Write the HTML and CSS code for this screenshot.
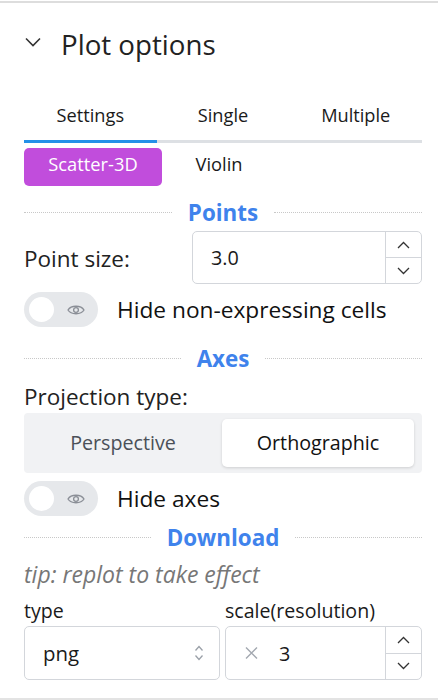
FILE: index.html
```html
<!DOCTYPE html>
<html>
<head>
<meta charset="utf-8">
<link rel="stylesheet" href="styles.css">
</head>
<body>
<div class="panel">
  <div class="header">
    <svg class="chev" width="16" height="10" viewBox="0 0 16 10"><path d="M1 1.5 L8 8.5 L15 1.5" fill="none" stroke="#333" stroke-width="1.6"/></svg>
    <span class="title">Plot options</span>
  </div>

  <div class="tabs">
    <div class="tab active">Settings</div>
    <div class="tab">Single</div>
    <div class="tab">Multiple</div>
  </div>

  <div class="subtabs">
    <div class="pill active">Scatter-3D</div>
    <div class="pill">Violin</div>
  </div>

  <div class="divider points"><span>Points</span></div>

  <div class="row">
    <label class="lbl">Point size:</label>
    <div class="num wide">
      <div class="num-val">3.0</div>
      <div class="spin">
        <div class="spin-btn"><svg width="13" height="8" viewBox="0 0 13 8"><path d="M1 7 L6.5 1.5 L12 7" fill="none" stroke="#333" stroke-width="1.3"/></svg></div>
        <div class="spin-btn"><svg width="13" height="8" viewBox="0 0 13 8"><path d="M1 1 L6.5 6.5 L12 1" fill="none" stroke="#333" stroke-width="1.3"/></svg></div>
      </div>
    </div>
  </div>

  <div class="toggle-row">
    <div class="toggle">
      <div class="knob"></div>
      <svg class="eye" width="18" height="12" viewBox="0 0 18 12"><path d="M1 6 C4 1 14 1 17 6 C14 11 4 11 1 6 Z" fill="none" stroke="#8a8e96" stroke-width="1.3"/><circle cx="9" cy="6" r="2.4" fill="none" stroke="#8a8e96" stroke-width="1.3"/></svg>
    </div>
    <span class="toggle-label">Hide non-expressing cells</span>
  </div>

  <div class="divider axes"><span>Axes</span></div>

  <div class="lbl proj">Projection type:</div>
  <div class="seg">
    <div class="seg-item">Perspective</div>
    <div class="seg-item active">Orthographic</div>
  </div>

  <div class="toggle-row t2">
    <div class="toggle">
      <div class="knob"></div>
      <svg class="eye" width="18" height="12" viewBox="0 0 18 12"><path d="M1 6 C4 1 14 1 17 6 C14 11 4 11 1 6 Z" fill="none" stroke="#8a8e96" stroke-width="1.3"/><circle cx="9" cy="6" r="2.4" fill="none" stroke="#8a8e96" stroke-width="1.3"/></svg>
    </div>
    <span class="toggle-label">Hide axes</span>
  </div>

  <div class="divider dl"><span>Download</span></div>

  <div class="tip">tip: replot to take effect</div>

  <div class="dl-grid">
    <div class="field">
      <div class="small-lbl">type</div>
      <div class="select">
        <span>png</span>
        <svg width="10" height="16" viewBox="0 0 10 16"><path d="M1.5 5.5 L5 1.5 L8.5 5.5 M1.5 10.5 L5 14.5 L8.5 10.5" fill="none" stroke="#9aa0a8" stroke-width="1.3"/></svg>
      </div>
    </div>
    <div class="field">
      <div class="small-lbl">scale(resolution)</div>
      <div class="num">
        <div class="num-val"><svg class="times" width="13" height="12" viewBox="0 0 13 12"><path d="M1 0.5 L12 11.5 M12 0.5 L1 11.5" fill="none" stroke="#a3a8b0" stroke-width="1.4"/></svg>3</div>
        <div class="spin">
          <div class="spin-btn"><svg width="13" height="8" viewBox="0 0 13 8"><path d="M1 7 L6.5 1.5 L12 7" fill="none" stroke="#333" stroke-width="1.3"/></svg></div>
          <div class="spin-btn"><svg width="13" height="8" viewBox="0 0 13 8"><path d="M1 1 L6.5 6.5 L12 1" fill="none" stroke="#333" stroke-width="1.3"/></svg></div>
        </div>
      </div>
    </div>
  </div>
</div>
</body>
</html>
```

FILE: styles.css
```css
html, body {
  margin: 0;
  padding: 0;
  background: #fff;
}
body {
  font-family: "Open Sans", "Noto Sans", sans-serif;
  color: #1f1f1f;
  width: 438px;
  height: 700px;
  overflow: hidden;
}
.panel {
  margin-top: 1px;
  border-top: 2px solid #dddddd;
  border-bottom: 2px solid #e3e3e3;
  padding: 0 16px 0 24px;
  height: 699px;
  box-sizing: border-box;
}
.header {
  display: flex;
  align-items: flex-start;
  height: 100px;
  padding-top: 22px;
  box-sizing: border-box;
}
.chev { margin: 12px 0 0 1px; }
.title {
  font-size: 27.7px;
  line-height: 38px;
  color: #222;
  margin-left: 20px;
}
.tabs {
  display: flex;
  border-bottom: 3px solid #dde0e4;
}
.tab {
  flex: 1;
  text-align: center;
  font-size: 18.2px;
  line-height: 25px;
  padding: 0 0 12px;
  margin-bottom: -3px;
  border-bottom: 3px solid transparent;
  color: #1a1a1a;
}
.tab.active { border-bottom-color: #2490e8; }
.subtabs {
  display: flex;
  margin-top: 5px;
}
.pill {
  height: 38px;
  display: flex;
  align-items: center;
  justify-content: center;
  font-size: 18.3px;
  border-radius: 5px;
  color: #1a1a1a;
  box-sizing: border-box;
  padding-bottom: 7px;
}
.pill.active { background: #c14ddc; color: #fff; width: 138px; }
.pill:not(.active) { width: 114px; }
.divider {
  display: flex;
  align-items: center;
  gap: 16px;
  height: 30px;
}
.divider::before, .divider::after {
  content: "";
  flex: 1;
  border-top: 1px dotted #c8c8c8;
  margin-top: -2px;
}
.divider span {
  color: #3f83ec;
  font-weight: 700;
  font-size: 22.4px;
  line-height: 30px;
}
.divider.points { margin-top: 12px; }
.row {
  display: flex;
  align-items: center;
  margin-top: 3px;
}
.lbl {
  font-size: 22.5px;
  line-height: 31px;
  color: #222;
  width: 168px;
  padding-top: 2px;
}
.num {
  display: flex;
  border: 1px solid #d3d6db;
  border-radius: 5px;
  height: 53px;
  box-sizing: border-box;
}
.num.wide { flex: 1; }
.num-val {
  flex: 1;
  display: flex;
  align-items: center;
  padding-left: 18px;
  font-size: 19.8px;
  color: #1a1a1a;
}
.spin {
  width: 35px;
  border-left: 1px solid #d3d6db;
  display: flex;
  flex-direction: column;
}
.spin-btn {
  flex: 1;
  display: flex;
  align-items: center;
  justify-content: center;
}
.spin-btn + .spin-btn { border-top: 1px solid #d3d6db; }
.toggle-row {
  display: flex;
  align-items: center;
  margin-top: 8px;
}
.toggle {
  width: 74px;
  height: 35px;
  border-radius: 18px;
  background: #e6e8eb;
  display: flex;
  align-items: center;
  box-sizing: border-box;
  padding-left: 5px;
  flex: none;
}
.knob {
  width: 25px;
  height: 25px;
  border-radius: 50%;
  background: #fff;
}
.eye { margin-left: 13px; }
.toggle-label {
  margin-left: 19px;
  font-size: 22.7px;
  line-height: 31px;
  color: #111;
}
.divider.axes { margin-top: 17px; }
.proj { width: auto; margin-top: 7px; padding-top: 0; }
.seg {
  display: grid;
  grid-template-columns: 198px 1fr;
  background: #f1f2f4;
  border-radius: 4px;
  height: 60px;
  padding: 6px 8px 6px 0;
  box-sizing: border-box;
  margin-top: 1px;
}
.seg-item {
  display: flex;
  align-items: center;
  justify-content: center;
  font-size: 19.7px;
  color: #4b5058;
  border-radius: 5px;
  padding-bottom: 1px;
}
.seg-item.active {
  background: #fff;
  color: #111;
  box-shadow: 0 1px 3px rgba(0,0,0,0.15);
}
.toggle-row.t2 { margin-top: 8px; }
.divider.dl { margin-top: 7px; }
.tip {
  font-style: italic;
  color: #777;
  font-size: 23px;
  line-height: 31px;
  margin-top: 6px;
}
.dl-grid {
  display: grid;
  grid-template-columns: 196px 1fr;
  column-gap: 5px;
  margin-top: 7px;
}
.small-lbl {
  font-size: 19.6px;
  line-height: 27px;
  color: #1a1a1a;
  margin-bottom: 2px;
}
.select {
  border: 1px solid #d3d6db;
  border-radius: 5px;
  height: 54px;
  box-sizing: border-box;
  display: flex;
  align-items: center;
  justify-content: space-between;
  padding: 0 15px 0 18px;
  font-size: 20.4px;
  color: #1a1a1a;
}
.field .num { height: 54px; }
.times {
  margin-right: 21px;
  margin-left: 1px;
}
```
